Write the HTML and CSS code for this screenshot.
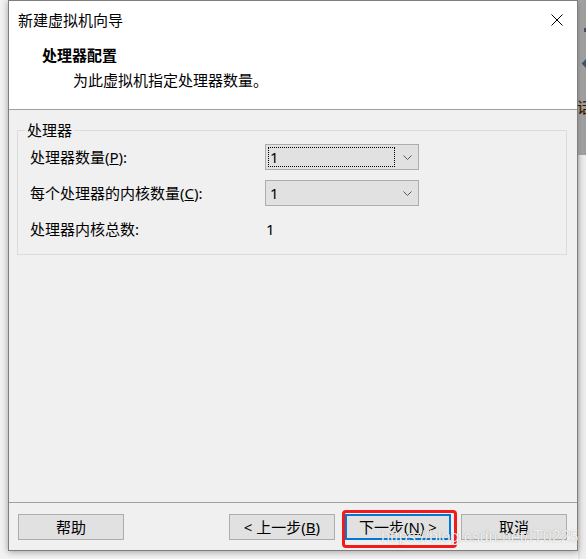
FILE: index.html
```html
<!DOCTYPE html>
<html lang="zh-CN">
<head>
<meta charset="utf-8">
<title>新建虚拟机向导</title>
<link rel="stylesheet" href="styles.css">
</head>
<body>
<div class="screen">
  <div class="gap-left"></div>
  <div class="window">
    <div class="top">
      <div class="titlebar">
        <span class="title">新建虚拟机向导</span>
        <svg class="close" width="12" height="12" viewBox="0 0 12 12"><path d="M0.5 0.5L11.5 11.5M11.5 0.5L0.5 11.5" stroke="#000" stroke-width="1" fill="none"/></svg>
      </div>
      <div class="header">
        <div class="h-title">处理器配置</div>
        <div class="h-sub">为此虚拟机指定处理器数量。</div>
      </div>
    </div>
    <div class="body">
      <fieldset class="group">
        <legend>处理器</legend>
        <div class="rows">
          <div class="label">处理器数量(<u>P</u>):</div>
          <div class="combo"><span class="focus">1</span><svg class="chev" width="9" height="5" viewBox="0 0 9 5"><polyline points="0.5,0.5 4.5,4.5 8.5,0.5" stroke="#5a5a5a" fill="none"/></svg></div>
          <div class="label">每个处理器的内核数量(<u>C</u>):</div>
          <div class="combo"><span class="val">1</span><svg class="chev" width="9" height="5" viewBox="0 0 9 5"><polyline points="0.5,0.5 4.5,4.5 8.5,0.5" stroke="#5a5a5a" fill="none"/></svg></div>
          <div class="label">处理器内核总数:</div>
          <div class="value">1</div>
        </div>
      </fieldset>
    </div>
    <div class="footer">
      <button class="btn">帮助</button>
      <div class="nav">
        <button class="btn">&lt; 上一步(<u>B</u>)</button>
        <button class="btn default">下一步(<u>N</u>) &gt;</button>
        <button class="btn">取消</button>
      </div>
    </div>
  </div>
  <div class="desk">
    <div class="desk-top">
      <span class="ico-sq"></span>
      <span class="ico-dia"></span>
      <span class="ico-char">话</span>
    </div>
    <div class="desk-bottom"></div>
  </div>
  <div class="annot"></div>
  <div class="watermark">https://blog.csdn.net/IT0225</div>
</div>
</body>
</html>
```
FILE: styles.css
```css
* { box-sizing: border-box; }
body {
  margin: 0;
  width: 586px;
  height: 559px;
  overflow: hidden;
  background: #f3f3f3;
  font-family: "Noto Sans", "Noto Sans CJK SC", sans-serif;
  font-size: 15px;
  color: #000;
}
.screen {
  display: flex;
  align-items: flex-start;
  height: 559px;
  position: relative;
}
.gap-left { width: 8px; flex: none; }
.window {
  width: 570px;
  height: 551px;
  flex: none;
  border: 1px solid #7e7e7e;
  display: flex;
  flex-direction: column;
  background: #f0f0f0;
  box-shadow: 0 1px 7px rgba(0,0,0,0.35);
  position: relative;
  z-index: 1;
}
.top {
  height: 109px;
  background: #fff;
  border-bottom: 1px solid #a0a0a0;
}
.titlebar {
  height: 37px;
  display: flex;
  align-items: center;
  justify-content: space-between;
  padding-left: 9px;
  padding-right: 14px;
  line-height: 20px;
}
.close { display: block; }
.header { padding-top: 7px; }
.h-title {
  font-weight: bold;
  line-height: 20px;
  padding-left: 33px;
}
.h-sub {
  line-height: 20px;
  margin-top: 5px;
  padding-left: 64px;
}
.body {
  flex: 1;
  padding: 10px 10px 0 8px;
}
.group {
  margin: 0;
  padding: 4px 0 12px 0;
  border: 1px solid #dcdcdc;
  min-width: 0;
}
.group legend {
  margin-left: 7px;
  padding: 0 2px;
  line-height: 20px;
}
.rows {
  display: grid;
  grid-template-columns: 235px 154px;
  grid-auto-rows: 26px;
  row-gap: 10px;
  padding-left: 12px;
  align-items: center;
}
.label { line-height: 20px; white-space: nowrap; }
.combo {
  height: 26px;
  border: 1px solid #adadad;
  background: #e1e1e1;
  position: relative;
  display: flex;
  align-items: center;
}
.focus {
  margin-left: 2px;
  width: 127px;
  height: 20px;
  border: 1px dotted #000;
  line-height: 18px;
  padding-left: 1px;
}
.val { padding-left: 4px; line-height: 20px; }
.chev { position: absolute; right: 6px; top: 10px; }
.value { line-height: 20px; padding-left: 1px; }
.footer {
  height: 48px;
  border-top: 1px solid #a0a0a0;
  display: flex;
  justify-content: space-between;
  align-items: flex-start;
  padding: 11px 10px 0 9px;
}
.nav { display: flex; gap: 10px; }
.btn {
  width: 106px;
  height: 26px;
  border: 1px solid #adadad;
  background: #e1e1e1;
  font-family: "Noto Sans", "Noto Sans CJK SC", sans-serif;
  font-size: 15px;
  color: #000;
  line-height: 20px;
  padding: 0;
  margin: 0;
}
.btn.default { border: 2px solid #0078d7; }
.desk {
  width: 8px;
  height: 559px;
  flex: none;
  display: flex;
  flex-direction: column;
  position: relative;
  overflow: hidden;
}
.desk-top {
  height: 155px;
  background: linear-gradient(to right, #b0b0b0, #9c9c9c);
  position: relative;
}
.desk-bottom {
  flex: 1;
  background: linear-gradient(to right, #dcdcdc, #eeeeee 3px);
}
.ico-sq {
  position: absolute;
  left: 6px;
  top: 28px;
  width: 3px;
  height: 4px;
  background: #3f5468;
}
.ico-dia {
  position: absolute;
  left: 5px;
  top: 60px;
  width: 7px;
  height: 7px;
  background: #3f5468;
  transform: rotate(45deg);
}
.ico-char {
  position: absolute;
  left: -1px;
  top: 97px;
  font-size: 15px;
  line-height: 20px;
  color: #1a1a1a;
  text-shadow: 1px 0 0 #c87820;
}
.annot {
  position: absolute;
  left: 342px;
  top: 510px;
  width: 115px;
  height: 38px;
  border: 3px solid #f41a1a;
  border-radius: 4px;
  z-index: 2;
}
.watermark {
  position: absolute;
  left: 381px;
  top: 528px;
  font-family: "Liberation Sans", Arial, sans-serif;
  font-size: 16px;
  line-height: 18px;
  color: rgba(255,255,255,0.9);
  text-shadow: 0 0 1px rgba(0,0,0,0.4);
  z-index: 3;
  white-space: nowrap;
}
```
